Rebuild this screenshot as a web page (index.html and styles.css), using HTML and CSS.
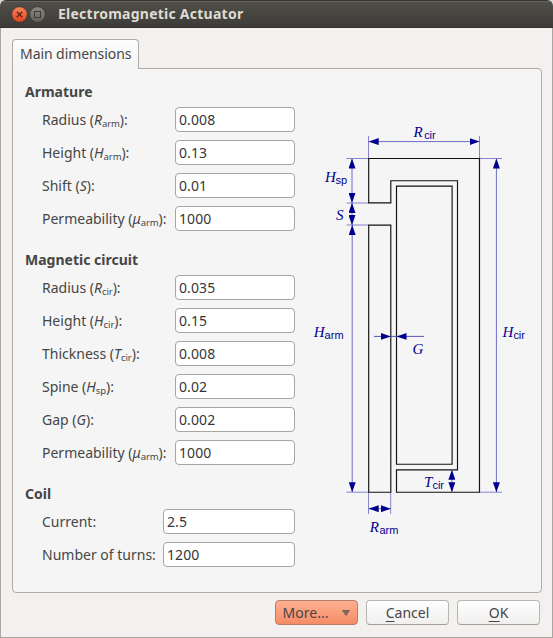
FILE: index.html
```html
<!DOCTYPE html>
<html lang="en">
<head>
<meta charset="utf-8">
<title>Electromagnetic Actuator</title>
<link rel="stylesheet" href="styles.css">
</head>
<body>
<div class="window">
  <header class="titlebar">
    <svg class="controls" width="36" height="20" viewBox="0 0 36 20">
      <defs>
        <linearGradient id="close" x2="0" y2="1"><stop stop-color="#f88460"/><stop offset="1" stop-color="#dc461a"/></linearGradient>
        <linearGradient id="max" x2="0" y2="1"><stop stop-color="#8b897f"/><stop offset="1" stop-color="#626059"/></linearGradient>
      </defs>
      <circle cx="8.5" cy="10.5" r="7.8" fill="url(#close)" stroke="#35342f" stroke-width=".7"/>
      <path d="M5.8 7.8l5.4 5.4M11.2 7.8l-5.4 5.4" stroke="#5a2413" stroke-width="1.3"/>
      <circle cx="26.5" cy="10.5" r="7.8" fill="url(#max)" stroke="#35342f" stroke-width=".7"/>
      <rect x="23.5" y="7.5" width="6" height="6" fill="none" stroke="#3c3b37"/>
    </svg>
    <h1 class="title">Electromagnetic Actuator</h1>
  </header>
  <main class="content">
    <div class="tab"><span>Main dimensions</span></div>
    <section class="panel">
      <form class="form">
        <div class="group">
          <h2>Armature</h2>
          <div class="row"><label>Radius (<i>R</i><sub>arm</sub>):</label><div class="field">0.008</div></div>
          <div class="row"><label>Height (<i>H</i><sub>arm</sub>):</label><div class="field">0.13</div></div>
          <div class="row"><label>Shift (<i>S</i>):</label><div class="field">0.01</div></div>
          <div class="row"><label>Permeability (<i>μ</i><sub>arm</sub>):</label><div class="field">1000</div></div>
        </div>
        <div class="group">
          <h2>Magnetic circuit</h2>
          <div class="row"><label>Radius (<i>R</i><sub>cir</sub>):</label><div class="field">0.035</div></div>
          <div class="row"><label>Height (<i>H</i><sub>cir</sub>):</label><div class="field">0.15</div></div>
          <div class="row"><label>Thickness (<i>T</i><sub>cir</sub>):</label><div class="field">0.008</div></div>
          <div class="row"><label>Spine (<i>H</i><sub>sp</sub>):</label><div class="field">0.02</div></div>
          <div class="row"><label>Gap (<i>G</i>):</label><div class="field">0.002</div></div>
          <div class="row"><label>Permeability (<i>μ</i><sub>arm</sub>):</label><div class="field">1000</div></div>
        </div>
        <div class="group coil">
          <h2>Coil</h2>
          <div class="row"><label>Current:</label><div class="field">2.5</div></div>
          <div class="row"><label>Number of turns:</label><div class="field">1200</div></div>
        </div>
      </form>
      <svg class="diagram" width="232" height="430" viewBox="303 115 232 430">
        <defs>
          <marker id="arrow" viewBox="0 0 10 7" refX="10" refY="3.5" markerWidth="10" markerHeight="7" markerUnits="userSpaceOnUse" orient="auto-start-reverse">
            <path d="M0 0L10 3.5L0 7z" fill="#00008f"/>
          </marker>
        </defs>
        <path class="guide" d="M368.5 136v23M479.5 136v23M346.5 158.5h22M480 158.5h22M346.5 203h22M346.5 225h22M346.5 492.2h22M480 492.2h22M368.5 492v22M390.7 492v22"/>
        <path class="outline" d="M368.7 158.5H479.5V492.2H396.5V469.8H457.5V180.7H390.8V202.9H368.7z"/>
        <path class="outline" d="M396.5 186.1H452.1V464.2H396.5zM368.7 225.1H390.8V492.2H368.7z"/>
        <g class="dimension">
          <path d="M368.7 141.6H479.5"/>
          <path d="M352 158.5V202.9"/>
          <path d="M352 202.9V225.1"/>
          <path d="M352.2 225.1V492.2"/>
          <path d="M496.4 158.5V492.2"/>
          <path d="M451.9 469.8V492.2"/>
          <path d="M368.7 508.7H390.8"/>
        </g>
        <path class="gap-line" d="M374 336.4H424"/>
        <path d="M381 333L391 336.4L381 339.8zM406.5 333L396.5 336.4L406.5 339.8z" fill="#00008f"/>
        <g class="symbols">
          <text x="413.5" y="137">R<tspan class="sub" x="424.2" y="138.6">cir</tspan></text>
          <text x="325" y="182">H<tspan class="sub" x="335.6" y="183.6">sp</tspan></text>
          <text x="336" y="220.2">S</text>
          <text x="313.8" y="337">H<tspan class="sub wide" x="324.6" y="338.6">arm</tspan></text>
          <text x="502.4" y="337">H<tspan class="sub" x="513.4" y="338.6">cir</tspan></text>
          <text x="412.6" y="353.8">G</text>
          <text x="424" y="487">T<tspan class="sub" x="432.6" y="488.6">cir</tspan></text>
          <text x="369.7" y="532">R<tspan class="sub wide" x="379.4" y="533.6">arm</tspan></text>
        </g>
      </svg>
    </section>
    <footer class="actions">
      <div class="button more"><span>More...</span><svg width="8" height="6" viewBox="0 0 8 6"><path d="M.5 .5H7.5L4 5.5z" fill="#87695a" stroke="#75655a"/></svg></div>
      <div class="button cancel"><span><u>C</u>ancel</span></div>
      <div class="button ok"><span><u>O</u>K</span></div>
    </footer>
  </main>
</div>
</body>
</html>
```
FILE: styles.css
```css
* { box-sizing: border-box; }
body { margin: 0; background: #d7d7d5; font: 14px/20px "Noto Sans", sans-serif; color: #464646; overflow: hidden; }
.window { height: 638px; display: flex; flex-direction: column; border-radius: 6px 6px 0 0; overflow: hidden; }
.titlebar { height: 28px; flex: none; display: flex; align-items: center; padding: 0 11px; gap: 11px; background: linear-gradient(#504f49, #3d3c38); border-top: 1px solid #353430; border-bottom: 1px solid #32312d; box-shadow: inset 0 1px #66645d; }
.controls { display: block; }
.title { margin: 0; font-size: 14px; font-weight: 700; line-height: 20px; color: #dfdbd2; letter-spacing: .25px; white-space: nowrap; }
.content { flex: 1; min-height: 0; padding: 11px 11px 0; background: #f2f1f0; border: 1px solid #aaa6a0; border-top: 0; }
.tab { position: relative; z-index: 1; width: 127px; height: 30px; padding: 4px 7px; background: linear-gradient(#fdfdfd, #f5f5f5 80%); border: 1px solid #b1aca5; border-bottom: 0; border-radius: 4px 4px 0 0; letter-spacing: -.07px; white-space: nowrap; }
.panel { display: flex; width: 530px; height: 525px; margin-top: -1px; padding: 12px 6px 0 12px; background: #f5f5f5; border: 1px solid #b1aca5; border-radius: 0 4px 4px 4px; }
.form { width: 270px; flex: none; }
.group { margin-bottom: 14px; }
h2 { margin: 0; height: 22px; font-size: 14px; font-weight: 700; line-height: 22px; white-space: nowrap; }
.row { height: 33px; display: grid; grid-template-columns: 133px 120px; align-items: center; padding-left: 17px; }
.coil .row { grid-template-columns: 121px 132px; }
label { white-space: nowrap; height: 20px; }
sub { font-size: 9.5px; line-height: 0; vertical-align: -2px; letter-spacing: -.1px; }
.field { height: 25px; padding: 0 3px; line-height: 24px; letter-spacing: .1px; background: #fff; border: 1px solid #aaa59e; border-radius: 4px; color: #363636; }
.diagram { display: block; margin: 34px 0 0 8px; flex: none; }
.guide { fill: none; stroke: #8585d0; stroke-width: 1; }
.outline { fill: none; stroke: #111; stroke-width: 1.15; }
.dimension path { fill: none; stroke: #6d6dc8; stroke-width: 1; marker-start: url(#arrow); marker-end: url(#arrow); }
.gap-line { stroke: #5555bb; stroke-width: 1; }
.symbols { font: italic 15px "Liberation Serif", serif; fill: #00008f; }
.sub { font: 11px "Liberation Sans", sans-serif; letter-spacing: -.1px; }
.wide { letter-spacing: .1px; }
.actions { display: flex; justify-content: flex-end; gap: 8px; padding: 7px 1px 0 0; }
.button { width: 83px; height: 25px; display: flex; align-items: center; justify-content: center; border: 1px solid #b9b5af; border-bottom-color: #a29e98; border-radius: 4px; background: linear-gradient(#fff, #f0efee); line-height: 20px; }
.button u { text-underline-offset: 3px; text-decoration-thickness: 1px; text-decoration-skip-ink: none; }
.more { background: linear-gradient(#ffb092, #f58c66); border-color: #b77d68; gap: 14px; }
```
